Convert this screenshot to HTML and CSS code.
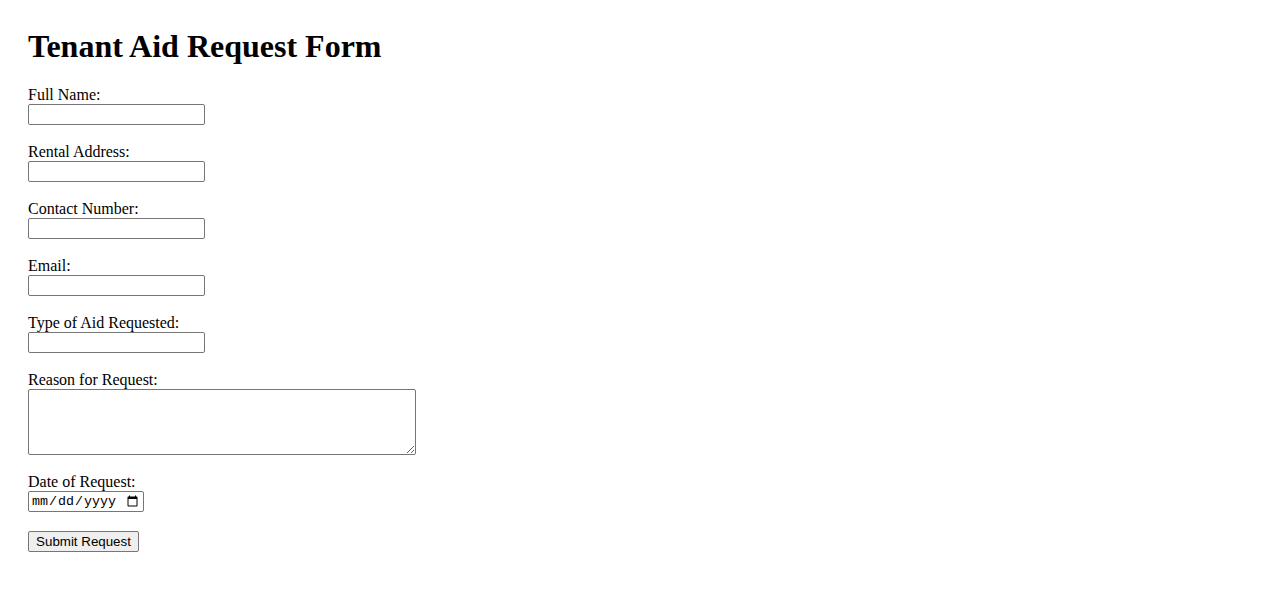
FILE: index.html
```html
<!DOCTYPE html>
<html lang="en">
<head>
<meta charset="utf-8">
<title>Tenant Aid Request Form</title>
<link rel="stylesheet" href="styles.css">
</head>
<body>
<div class="page">
  <h1 class="title">Tenant Aid Request Form</h1>
  <form class="form">
    <div class="field">
      <label class="label" for="name">Full Name:</label>
      <input class="text-input" type="text" id="name">
    </div>
    <div class="field">
      <label class="label" for="address">Rental Address:</label>
      <input class="text-input" type="text" id="address">
    </div>
    <div class="field">
      <label class="label" for="phone">Contact Number:</label>
      <input class="text-input" type="tel" id="phone">
    </div>
    <div class="field">
      <label class="label" for="email">Email:</label>
      <input class="text-input" type="email" id="email">
    </div>
    <div class="field">
      <label class="label" for="aid">Type of Aid Requested:</label>
      <input class="text-input" type="text" id="aid">
    </div>
    <div class="field">
      <label class="label" for="reason">Reason for Request:</label>
      <textarea class="text-area" id="reason"></textarea>
    </div>
    <div class="field">
      <label class="label" for="date">Date of Request:</label>
      <input class="date-input" type="date" id="date">
    </div>
    <div class="actions">
      <button class="submit" type="submit">Submit Request</button>
    </div>
  </form>
</div>
</body>
</html>
```
FILE: styles.css
```css
html, body {
  margin: 0;
  padding: 0;
  background: #ffffff;
}

.page {
  padding: 28px 28px;
  font-family: "Liberation Serif", "Times New Roman", serif;
  color: #000000;
}

.title {
  margin: 0 0 19.5px 0;
  font-size: 32px;
  font-weight: bold;
  line-height: 37px;
}

.form {
  display: flex;
  flex-direction: column;
  align-items: flex-start;
  font-size: 16px;
}

.field {
  display: flex;
  flex-direction: column;
  align-items: flex-start;
  margin-bottom: 16.5px;
}

.label {
  display: block;
  height: 19.5px;
  line-height: 20px;
}

.text-input,
.date-input,
.text-area {
  box-sizing: border-box;
  margin: 0;
  border: 1px solid #767676;
  border-radius: 2px;
  background: #ffffff;
  padding: 1px 2px;
}

.text-input {
  width: 177px;
  height: 21px;
  font: 13.33px "Liberation Sans", Arial, sans-serif;
}

.text-area {
  width: 388px;
  height: 66px;
  padding: 2px;
  font: 13.33px "Liberation Mono", monospace;
  resize: both;
}

.date-input {
  width: 116px;
  height: 21px;
  font: 13.33px "Liberation Mono", monospace;
  color: #000000;
}

.actions {
  padding-top: 2px;
}

.submit {
  box-sizing: border-box;
  margin: 0;
  width: 111px;
  height: 21px;
  padding: 1px 6px;
  border: 1px solid #767676;
  border-radius: 2px;
  background: #efefef;
  color: #000000;
  font: 13.33px "Liberation Sans", Arial, sans-serif;
  line-height: 17px;
}
```
